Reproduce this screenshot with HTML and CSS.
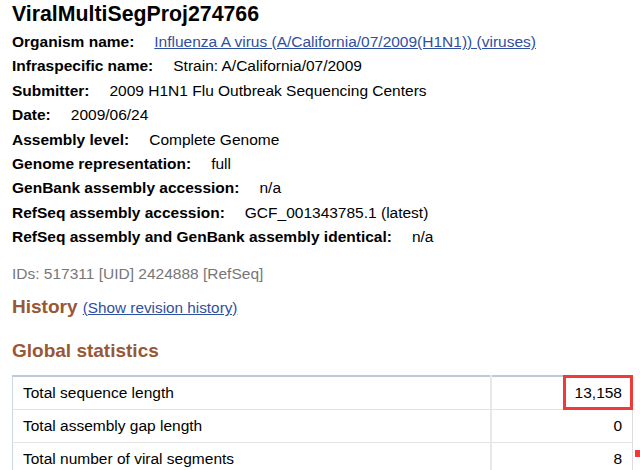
FILE: index.html
```html
<!DOCTYPE html>
<html lang="en">
  <head>
    <meta charset="UTF-8" />
    <meta name="viewport" content="width=device-width, initial-scale=1.0" />
    <title>ViralMultiSegProj274766 - Assembly</title>
    <link rel="stylesheet" href="styles.css">
  </head>
  <body>
    <div class="page">
      <h1 class="title">ViralMultiSegProj274766</h1>

      <div class="summary">
        <div class="row"><span class="label">Organism name:</span><a href="#" class="value">Influenza A virus (A/California/07/2009(H1N1)) (viruses)</a></div>
        <div class="row"><span class="label">Infraspecific name:</span><span class="value">Strain: A/California/07/2009</span></div>
        <div class="row"><span class="label">Submitter:</span><span class="value">2009 H1N1 Flu Outbreak Sequencing Centers</span></div>
        <div class="row"><span class="label">Date:</span><span class="value">2009/06/24</span></div>
        <div class="row"><span class="label">Assembly level:</span><span class="value">Complete Genome</span></div>
        <div class="row"><span class="label">Genome representation:</span><span class="value">full</span></div>
        <div class="row"><span class="label">GenBank assembly accession:</span><span class="value">n/a</span></div>
        <div class="row"><span class="label">RefSeq assembly accession:</span><span class="value">GCF_001343785.1 (latest)</span></div>
        <div class="row"><span class="label">RefSeq assembly and GenBank assembly identical:</span><span class="value">n/a</span></div>
      </div>

      <div class="ids">IDs: 517311 [UID] 2424888 [RefSeq]</div>

      <h2 class="section history">History <a href="#" class="small-link">(Show revision history)</a></h2>

      <h2 class="section">Global statistics</h2>

      <div class="stats">
        <table class="stats-table">
          <tr>
            <td class="name">Total sequence length</td>
            <td class="num">13,158</td>
          </tr>
          <tr>
            <td class="name">Total assembly gap length</td>
            <td class="num">0</td>
          </tr>
          <tr>
            <td class="name">Total number of viral segments</td>
            <td class="num">8</td>
          </tr>
        </table>
        <!-- annotation marks drawn over the table -->
        <div class="highlight"></div>
        <div class="marker"></div>
      </div>
    </div>
  </body>
</html>
```

FILE: styles.css
```css
body {
  margin: 0;
  padding: 0;
  background-color: #fff;
  font-family: Arial, "Liberation Sans", sans-serif;
  color: #000;
  overflow: hidden;
}

.page {
  padding: 0 12px;
}

.title {
  font-size: 21.3px;
  line-height: 24px;
  font-weight: bold;
  margin: 2px 0 4px;
}

.summary .row {
  font-size: 15.5px;
  line-height: 24.4px;
  white-space: nowrap;
}

.label {
  font-weight: bold;
  margin-right: 20px;
}

.summary a {
  color: #2f4fa0;
  text-decoration: underline;
}

.ids {
  font-size: 15.5px;
  line-height: 24.4px;
  color: #777;
  margin-top: 12px;
}

.section {
  font-size: 19px;
  line-height: 24px;
  font-weight: bold;
  color: #985735;
  margin: 0;
}

.history {
  margin-top: 9px;
  margin-bottom: 19px;
}

.small-link {
  font-size: 15.3px;
  font-weight: normal;
  color: #2f4fa0;
  text-decoration: underline;
}

.stats {
  position: relative;
  margin-top: 12px;
}

.stats-table {
  width: 621px;
  border-collapse: collapse;
  font-size: 15.5px;
  line-height: 18px;
}

.stats-table tr:first-child td {
  border-top: 2px solid #bccada;
}

.stats-table td {
  padding: 7px 10px;
  border-bottom: 1px solid #e3e3e3;
}

.stats-table .name {
  width: 457px;
  border-left: 1px solid #cdd7e2;
  border-right: 2px solid #e8e8e8;
}

.stats-table .num {
  text-align: right;
  border-right: 1px solid #dcdcdc;
}

/* Red annotation box */
.highlight {
  position: absolute;
  left: 551px;
  top: 0;
  width: 70px;
  height: 35px;
  box-sizing: border-box;
  border: 3px solid #f03a3a;
}

.marker {
  position: absolute;
  left: 623px;
  top: 75px;
  width: 10px;
  height: 7px;
  background-color: #f03a3a;
}
```
